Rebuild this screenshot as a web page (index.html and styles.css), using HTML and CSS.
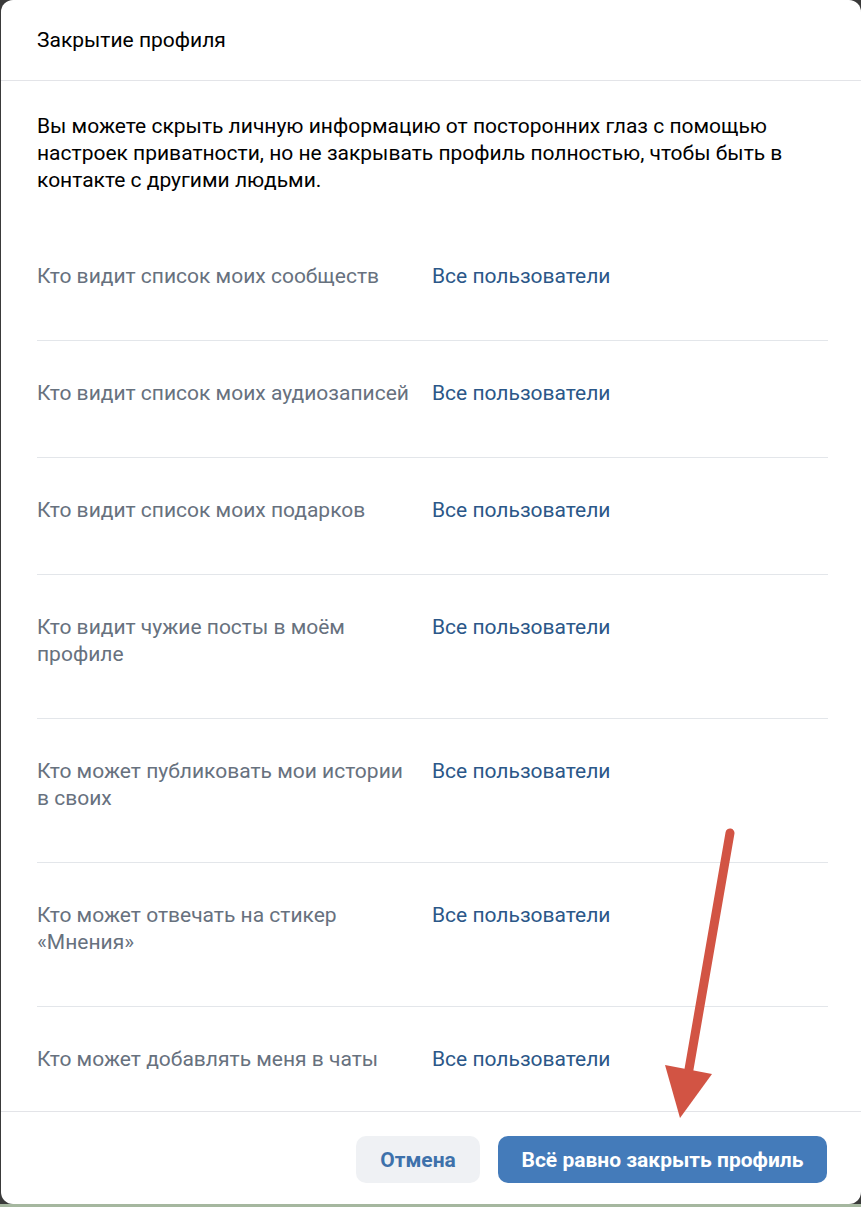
FILE: index.html
```html
<!DOCTYPE html>
<html lang="ru">
<head>
<meta charset="utf-8">
<title>Закрытие профиля</title>
<link rel="stylesheet" href="styles.css">
</head>
<body>
<div class="modal">
  <div class="modal-header">
    <h1 class="modal-title">Закрытие профиля</h1>
  </div>
  <div class="modal-body">
    <p class="intro">Вы можете скрыть личную информацию от посторонних глаз с помощью настроек приватности, но не закрывать профиль полностью, чтобы быть в контакте с другими людьми.</p>
    <div class="rows">
      <div class="row"><div class="row-label">Кто видит список моих сообществ</div><div class="row-value">Все пользователи</div></div>
      <div class="row"><div class="row-label">Кто видит список моих аудиозаписей</div><div class="row-value">Все пользователи</div></div>
      <div class="row"><div class="row-label">Кто видит список моих подарков</div><div class="row-value">Все пользователи</div></div>
      <div class="row"><div class="row-label">Кто видит чужие посты в моём профиле</div><div class="row-value">Все пользователи</div></div>
      <div class="row"><div class="row-label">Кто может публиковать мои истории в своих</div><div class="row-value">Все пользователи</div></div>
      <div class="row"><div class="row-label">Кто может отвечать на стикер «Мнения»</div><div class="row-value">Все пользователи</div></div>
      <div class="row"><div class="row-label">Кто может добавлять меня в чаты</div><div class="row-value">Все пользователи</div></div>
    </div>
  </div>
  <div class="modal-footer">
    <button class="btn btn-secondary">Отмена</button>
    <button class="btn btn-primary">Всё равно закрыть профиль</button>
  </div>
</div>
<div class="page-strip"></div>
<svg class="annotation-arrow" width="861" height="1207" viewBox="0 0 861 1207" aria-hidden="true">
  <line x1="730" y1="833" x2="688" y2="1075" stroke="#d25444" stroke-width="9" stroke-linecap="round"/>
  <polygon points="665,1065 712,1074 680,1118" fill="#d25444"/>
</svg>
</body>
</html>
```

FILE: styles.css
```css
html, body {
  margin: 0;
  padding: 0;
}
body {
  background: #3a3a3a;
  width: 861px;
  height: 1207px;
  overflow: hidden;
  position: relative;
  font-family: Roboto, "Liberation Sans", Arial, sans-serif;
}
.modal {
  margin-left: 1px;
  width: 860px;
  height: 1204px;
  background: #fff;
  border-radius: 12px;
  overflow: hidden;
  display: flex;
  flex-direction: column;
}
.modal-header {
  height: 81px;
  flex: none;
  box-sizing: border-box;
  border-bottom: 1px solid #e3e4e8;
  padding: 0 36px;
  display: flex;
  align-items: center;
}
.modal-title {
  margin: 0;
  font-size: 21px;
  font-weight: 400;
  color: #000;
}
.modal-body {
  flex: 1;
  overflow: hidden;
  padding: 32px 33px 0 36px;
}
.intro {
  margin: 0;
  font-size: 21px;
  line-height: 27px;
  color: #000;
}
.rows {
  margin-top: 30px;
}
.row {
  display: grid;
  grid-template-columns: 380px 1fr;
  column-gap: 15px;
  padding: 39px 0 50px;
  border-bottom: 1px solid #e3e6ea;
  font-size: 21px;
  line-height: 27px;
}
.row-label {
  color: #67717e;
}
.row-value {
  color: #2b5788;
}
.modal-footer {
  flex: none;
  height: 93px;
  box-sizing: border-box;
  border-top: 1px solid #e3e4e8;
  padding: 24px 34px 0 0;
  display: flex;
  justify-content: flex-end;
  align-items: flex-start;
  gap: 18px;
}
.btn {
  height: 47px;
  border: none;
  border-radius: 10px;
  font-family: Roboto, "Liberation Sans", Arial, sans-serif;
  font-size: 21px;
  font-weight: 700;
  padding: 0;
  cursor: pointer;
}
.btn-secondary {
  background: #eff1f4;
  color: #3e71ab;
  width: 124px;
}
.btn-primary {
  background: #447bba;
  color: #fff;
  width: 329px;
}
.page-strip {
  height: 3px;
  background: #a5b79f;
}
.annotation-arrow {
  position: absolute;
  left: 0;
  top: 0;
  pointer-events: none;
}
```
